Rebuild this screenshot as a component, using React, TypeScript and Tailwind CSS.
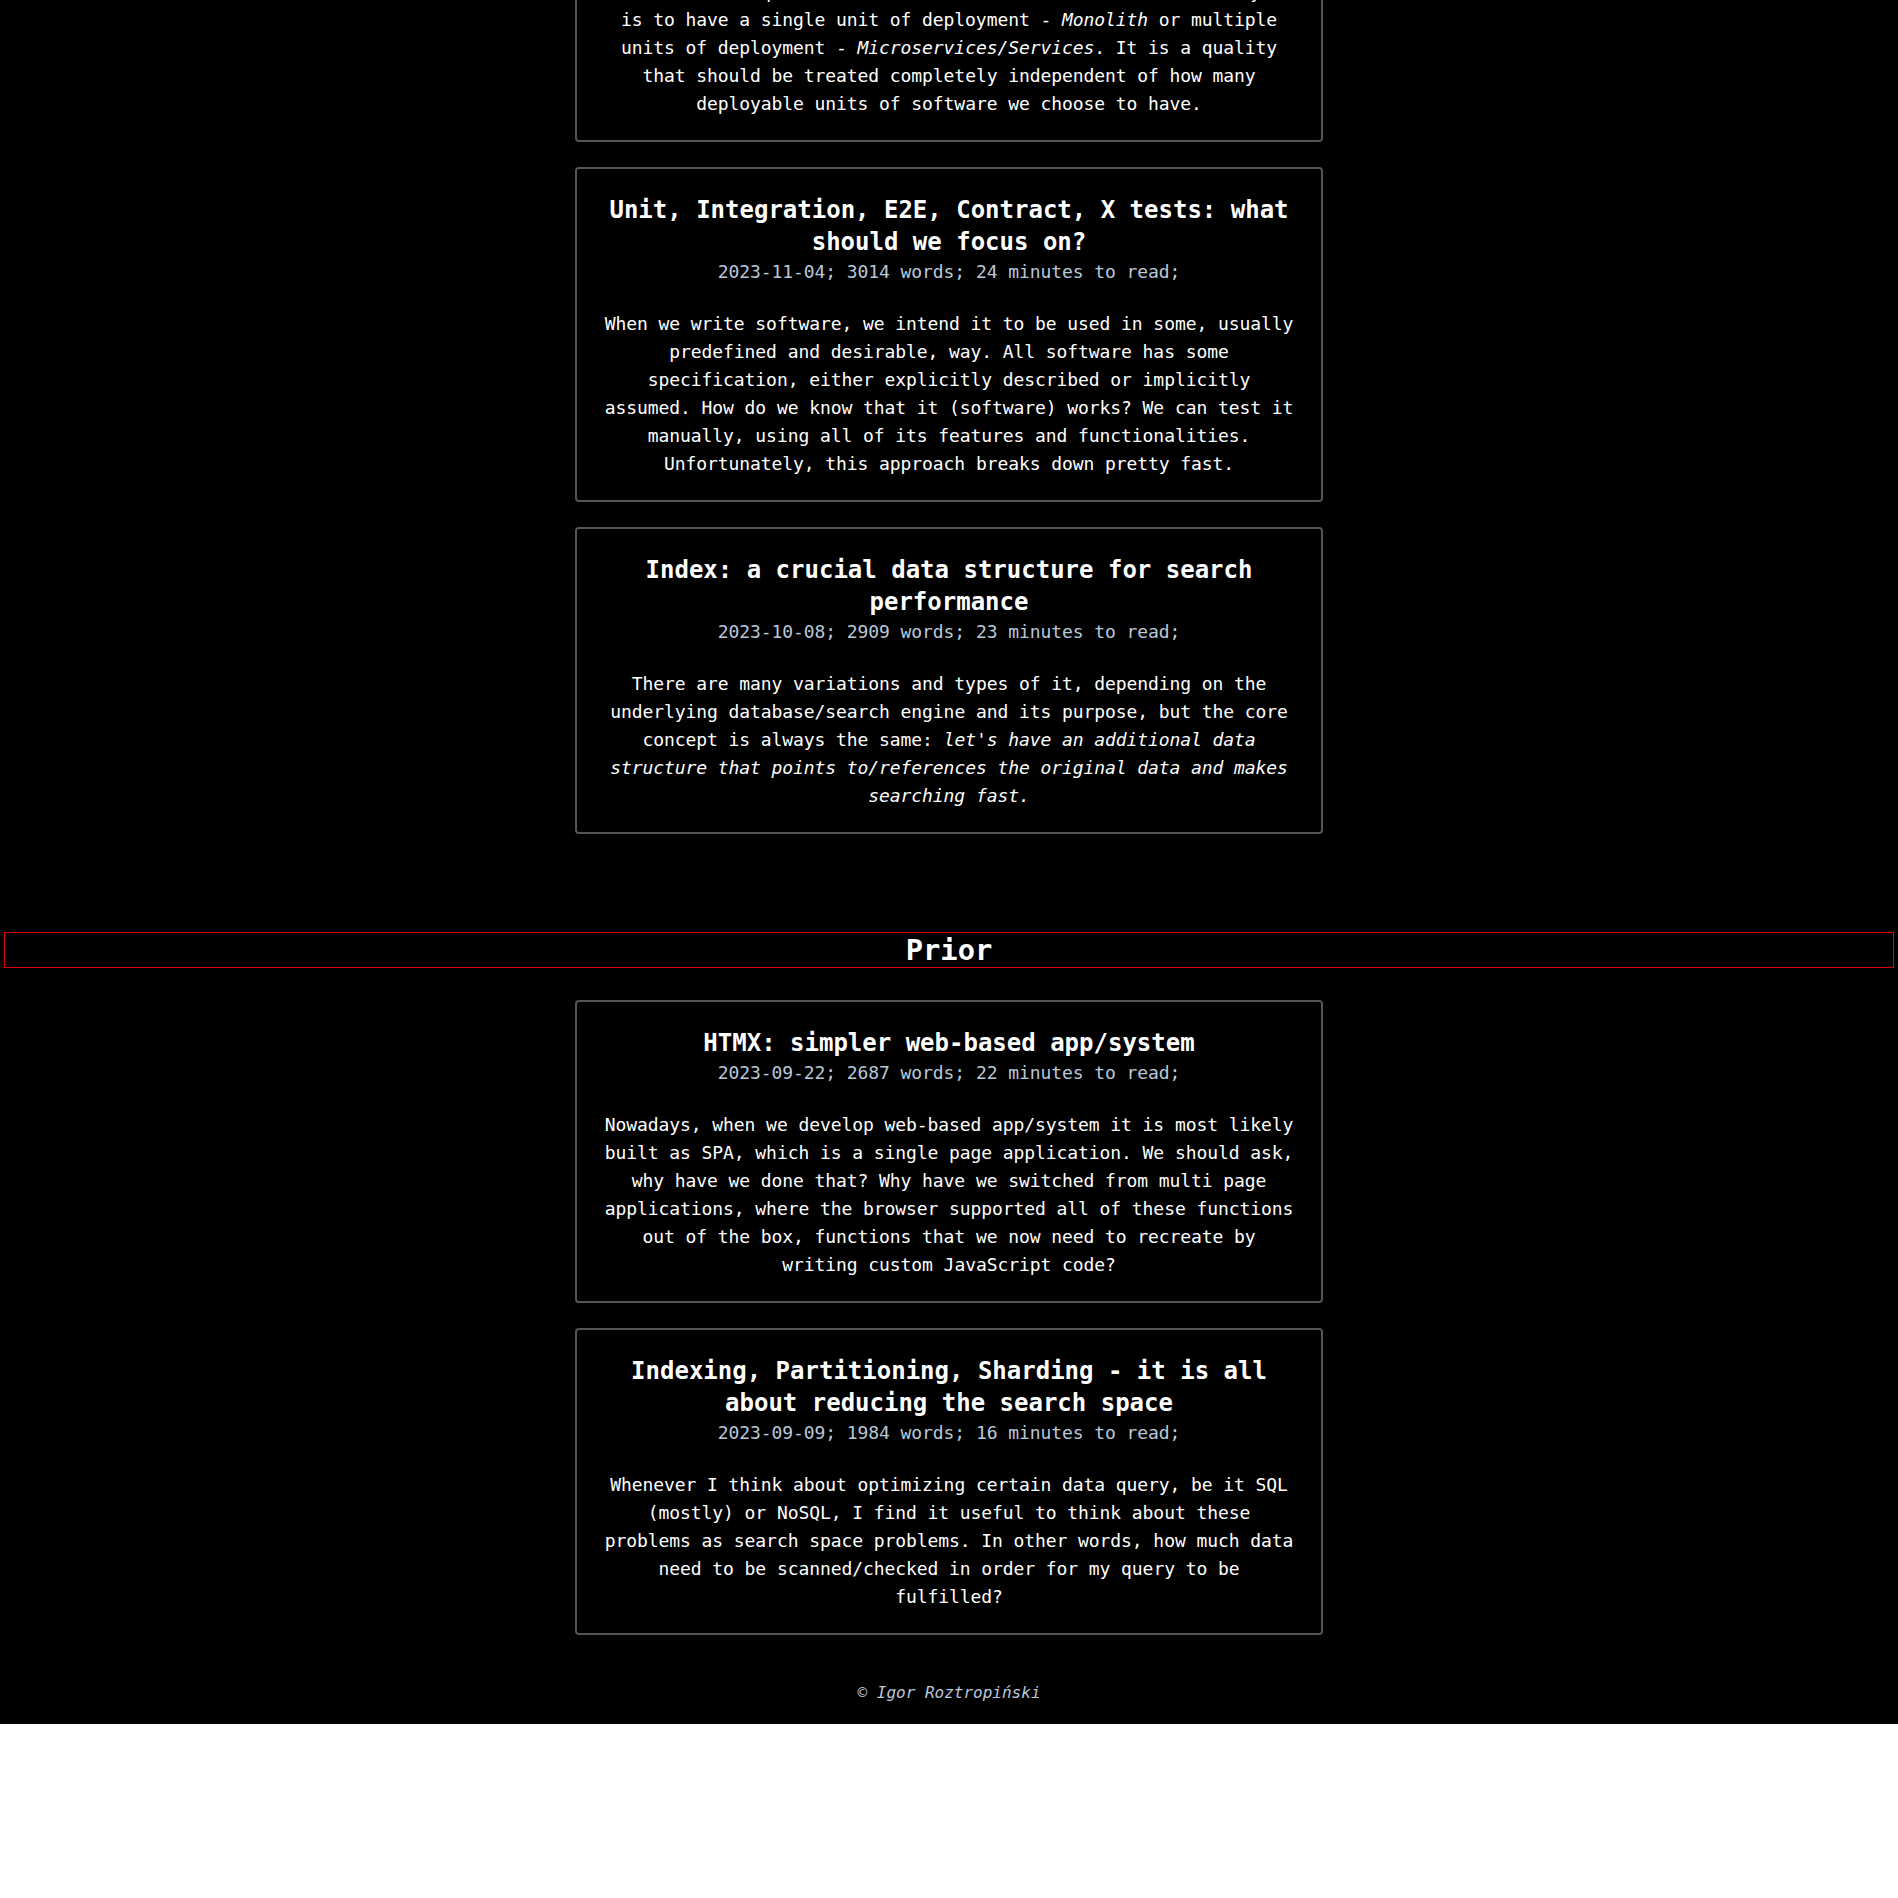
import React from 'react';

type Post = {
    title: string;
    meta: string;
    body: React.ReactNode;
};

const latest: Post[] = [
    {
        title: "Modular Monolith and Microservices: Modularity is what truly matters",
        meta: "2023-11-26; 2744 words; 22 minutes to read;",
        body: (
            <>
                Modularity is a crucial concept when designing and creating software. Independent of whether our chosen architecture style
                is to have a single unit of deployment - <em>Monolith</em> or multiple units of deployment - <em>Microservices/Services</em>.
                It is a quality that should be treated completely independent of how many deployable units of software we choose to have.
            </>
        ),
    },
    {
        title: "Unit, Integration, E2E, Contract, X tests: what should we focus on?",
        meta: "2023-11-04; 3014 words; 24 minutes to read;",
        body: (
            <>
                When we write software, we intend it to be used in some, usually predefined and desirable, way. All software has some
                specification, either explicitly described or implicitly assumed. How do we know that it (software) works? We can test it
                manually, using all of its features and functionalities. Unfortunately, this approach breaks down pretty fast.
            </>
        ),
    },
    {
        title: "Index: a crucial data structure for search performance",
        meta: "2023-10-08; 2909 words; 23 minutes to read;",
        body: (
            <>
                There are many variations and types of it, depending on the underlying database/search engine and its purpose, but the core
                concept is always the same:{' '}
                <em>let's have an additional data structure that points to/references the original data and makes searching fast.</em>
            </>
        ),
    },
];

const prior: Post[] = [
    {
        title: "HTMX: simpler web-based app/system",
        meta: "2023-09-22; 2687 words; 22 minutes to read;",
        body: (
            <>
                Nowadays, when we develop web-based app/system it is most likely built as SPA, which is a single page application. We should
                ask, why have we done that? Why have we switched from multi page applications, where the browser supported all of these
                functions out of the box, functions that we now need to recreate by writing custom JavaScript code?
            </>
        ),
    },
    {
        title: "Indexing, Partitioning, Sharding - it is all about reducing the search space",
        meta: "2023-09-09; 1984 words; 16 minutes to read;",
        body: (
            <>
                Whenever I think about optimizing certain data query, be it SQL (mostly) or NoSQL, I find it useful to think about these
                problems as search space problems. In other words, how much data need to be scanned/checked in order for my query to be
                fulfilled?
            </>
        ),
    },
];

function PostCard({ post }: { post: Post }) {
    return (
        <div className="w-[748px] border-2 border-[#555555] rounded-[4px] bg-black px-[23px] pt-[25px] pb-[22px] text-center">
            <div className="text-[24px] leading-[32px] font-bold text-white">{post.title}</div>
            <div className="text-[18px] leading-[28px] tracking-[-0.08px] text-[#b9c8da]">{post.meta}</div>
            <div className="mt-6 text-[18px] leading-[28px] tracking-[-0.08px] text-white">{post.body}</div>
        </div>
    );
}

export default function App() {
    return (
        <div className="bg-black text-white font-['DejaVu_Sans_Mono',monospace]">
            {/* Latest posts (scrolled: first card partly above the fold) */}
            <div className="flex flex-col items-center gap-[25px] -mt-[193px]">
                {latest.map((post, i) => (
                    <PostCard key={i} post={post} />
                ))}
            </div>

            {/* Prior section */}
            <div className="mt-[98px] mx-[4px] border border-[#dd0000] text-center">
                <h2 className="text-[28.8px] leading-[34px] font-bold text-white">Prior</h2>
            </div>

            <div className="flex flex-col items-center gap-[25px] mt-[32px]">
                {prior.map((post, i) => (
                    <PostCard key={i} post={post} />
                ))}
            </div>

            <footer className="mt-[46px] pb-[19px] text-center text-[16px] leading-[24px] italic text-[#b9c8da]">
                © Igor Roztropiński
            </footer>
        </div>
    );
}
